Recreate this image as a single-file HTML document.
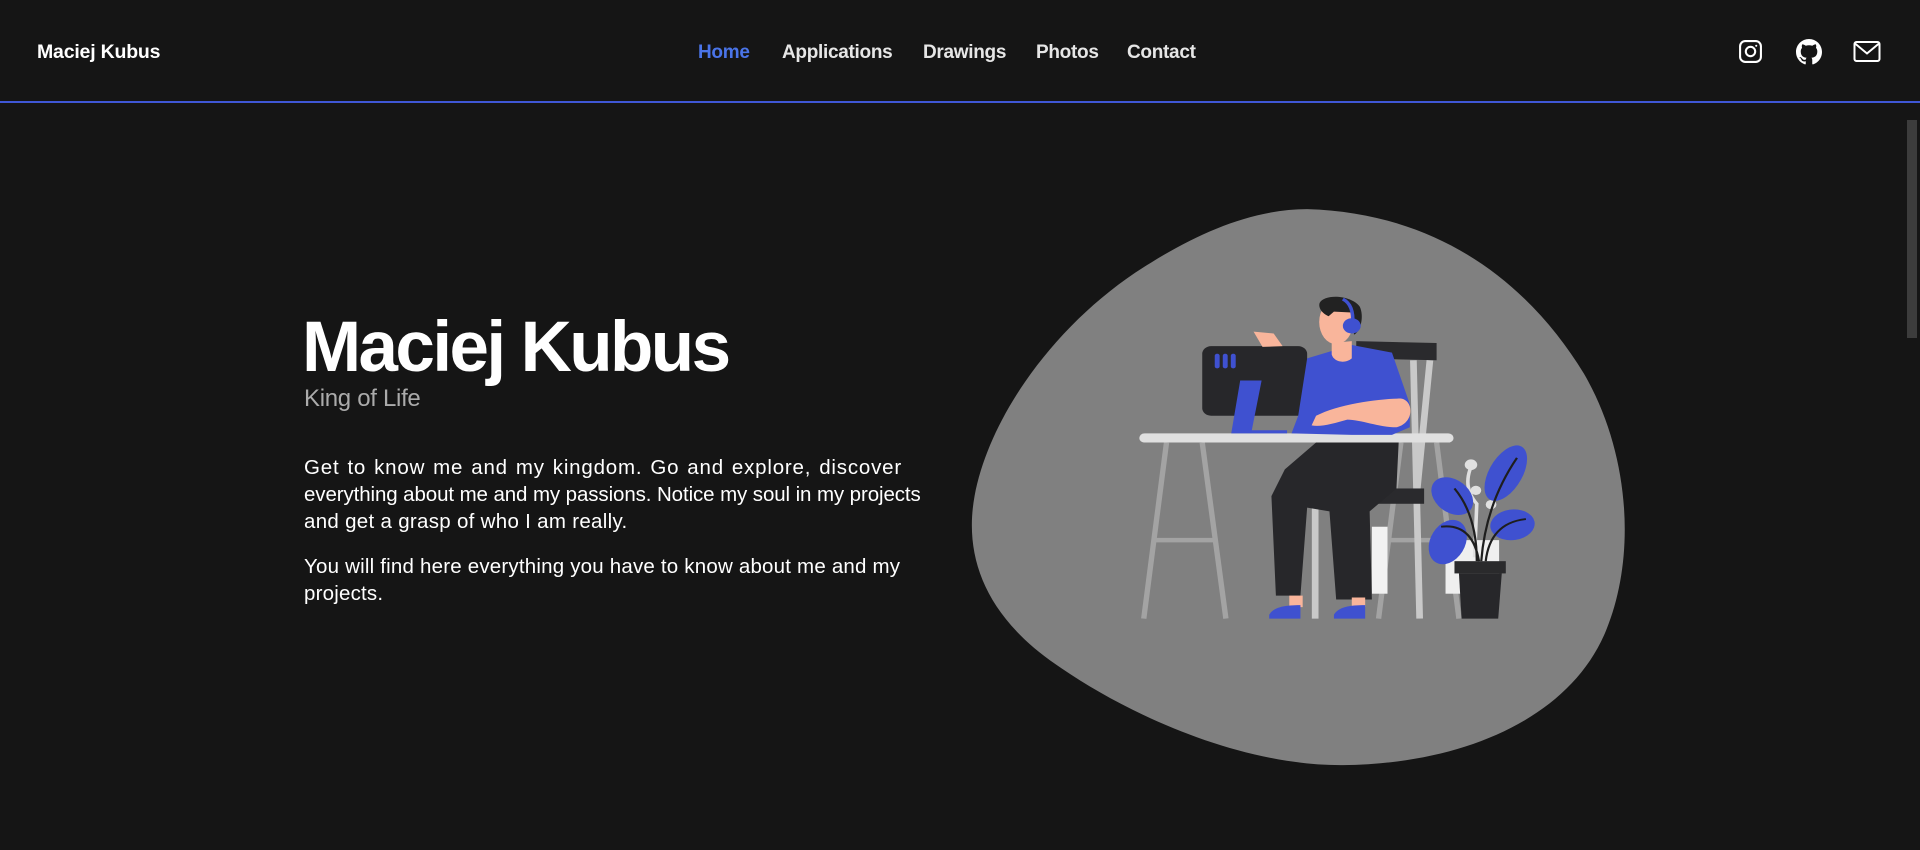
<!DOCTYPE html>
<html><head><meta charset="utf-8"><style>
*{margin:0;padding:0;box-sizing:border-box}
html,body{width:1920px;height:850px;overflow:hidden;background:#151515;font-family:"Liberation Sans",sans-serif;color:#fff}
.hdr{position:absolute;left:0;top:0;width:1920px;height:103px;border-bottom:2px solid #3f57d6}
.logo{position:absolute;left:37px;top:41px;font-weight:bold;font-size:19.5px;letter-spacing:-0.2px}
.nav{position:absolute;top:42px;font-size:19px;font-weight:bold;color:#e6e6e6;letter-spacing:-0.3px}
.ic{position:absolute;top:39px}
.sb{position:absolute;right:0;top:105px;width:15px;height:745px;background:#151515}
.th{position:absolute;right:3px;top:120px;width:10px;height:218px;background:#3c3c3c}
h1{position:absolute;left:302px;top:308px;font-size:71px;font-weight:bold;letter-spacing:-2.6px;line-height:80px}
.sub{position:absolute;left:304px;top:385px;font-size:24px;color:#ababab;letter-spacing:-0.3px}
.p{position:absolute;left:304px;white-space:nowrap;font-size:20.5px;line-height:27px;letter-spacing:0.2px}
</style></head><body>
<div class="hdr">
<div class="logo">Maciej Kubus</div>
<div class="nav" style="left:698px;color:#4a74e8">Home</div>
<div class="nav" style="left:782px">Applications</div>
<div class="nav" style="left:923px">Drawings</div>
<div class="nav" style="left:1036px">Photos</div>
<div class="nav" style="left:1127px">Contact</div>
<svg class="ic" style="left:1738px" width="25" height="25" viewBox="0 0 24 24" fill="none" stroke="#fff" stroke-width="2"><rect x="2" y="2" width="20" height="20" rx="5"/><circle cx="12" cy="12" r="4.5"/><circle cx="17.5" cy="6.5" r="1" fill="#fff" stroke="none"/></svg>
<svg class="ic" style="left:1796px" width="26" height="26" viewBox="0 0 16 16" fill="#fff"><path d="M8 0C3.58 0 0 3.58 0 8c0 3.54 2.29 6.53 5.47 7.59.4.07.55-.17.55-.38 0-.19-.01-.82-.01-1.49-2.01.37-2.53-.49-2.69-.94-.09-.23-.48-.94-.82-1.13-.28-.15-.68-.52-.01-.53.63-.01 1.08.58 1.23.82.72 1.21 1.87.87 2.33.66.07-.52.28-.87.51-1.07-1.78-.2-3.64-.89-3.64-3.95 0-.87.31-1.59.82-2.15-.08-.2-.36-1.02.08-2.12 0 0 .67-.21 2.2.82.64-.18 1.32-.27 2-.27.68 0 1.36.09 2 .27 1.53-1.04 2.2-.82 2.2-.82.44 1.1.16 1.92.08 2.12.51.56.82 1.27.82 2.15 0 3.07-1.87 3.75-3.65 3.95.29.25.54.73.54 1.48 0 1.07-.01 1.93-.01 2.2 0 .21.15.46.55.38A8.01 8.01 0 0016 8c0-4.42-3.58-8-8-8z"/></svg>
<svg class="ic" style="left:1853px;top:40px" width="28" height="23" viewBox="0 0 28 22" fill="none" stroke="#fff" stroke-width="2"><rect x="1.5" y="1.5" width="25" height="19" rx="2"/><path d="M2 3l12 10 12-10"/></svg>
</div>
<div class="sb"></div><div class="th"></div>
<h1>Maciej Kubus</h1>
<div class="sub">King of Life</div>
<div class="p" style="top:454px"><span style="letter-spacing:0.8px;word-spacing:1.5px">Get to know me and my kingdom. Go and explore, discover</span><br><span style="letter-spacing:-0.1px">everything about me and my passions. Notice my soul in my projects</span><br><span style="letter-spacing:0.3px">and get a grasp of who I am really.</span></div>
<div class="p" style="top:553px">You will find here everything you have to know about me and my<br>projects.</div>
<svg style="position:absolute;left:950px;top:190px" width="700" height="600" viewBox="0 0 1568 1568" preserveAspectRatio="none">
<path d="M800 50C1100 60 1300 250 1420 480C1520 680 1540 950 1470 1150C1390 1380 1150 1500 880 1503C650 1505 400 1370 250 1250C80 1120 30 960 55 800C90 580 250 330 450 190C560 110 680 50 800 50Z" fill="#808080"/>
<g stroke="#a3a3a3" stroke-width="12" fill="none">
<path d="M485 660L434 1120M565 660L618 1120M460 915H595M1090 660L1140 1120M1010 660L960 1120M975 915H1085"/></g>
<g stroke="#c9c9c9" stroke-width="15"><path d="M1038 445L1052 1120M1075 445L1045 800M818 820L818 1120"/></g>
<rect x="945" y="880" width="35" height="175" fill="#f2f2f2"/>
<rect x="1110" y="915" width="120" height="140" fill="#efefef"/>
<path d="M910 395L1090 400L1090 445L910 440Z" fill="#2a2a2d"/>
<rect x="940" y="780" width="122" height="40" fill="#2a2a2d"/>
<rect x="424" y="636" width="704" height="24" rx="12" fill="#e0e0e0"/>
<rect x="565" y="408" width="235" height="182" rx="20" fill="#27272a"/>
<g fill="#3f51d0"><rect x="593" y="428" width="11" height="38" rx="5"/><rect x="611" y="428" width="11" height="38" rx="5"/><rect x="629" y="428" width="11" height="38" rx="5"/>
<path d="M650 498H698L676 628H755V636H630Z"/></g>
<path d="M800 440L900 405L990 425L1030 560L1030 620L990 640L900 640L765 636L780 590Z" fill="#3f51d0"/>
<path d="M820 590C870 560 960 545 1010 545C1040 550 1040 610 1000 620C960 620 920 600 890 600C860 610 830 620 810 615Z" fill="#f9b59b"/>
<path d="M680 370L725 375L745 408L700 410Z" fill="#f9b59b"/>
<path d="M855 400L900 395L900 440C885 455 860 450 855 430Z" fill="#f9b59b"/>
<ellipse cx="865" cy="345" rx="38" ry="58" fill="#f9b59b"/>
<path d="M828 295C840 270 900 275 918 305C928 330 920 370 905 378L900 320L860 318L848 330C830 320 825 305 828 295Z" fill="#222"/>
<path d="M880 285Q905 300 902 350" stroke="#3f51d0" stroke-width="8" fill="none"/>
<circle cx="900" cy="355" r="20" fill="#3f51d0"/>
<path d="M820 660H1005L1000 780L940 840L945 1070H865L850 840L800 830L785 1060H730L720 800L750 730Z" fill="#27272a"/>
<path d="M760 1060H790V1090H760ZM900 1065H930V1090H900Z" fill="#f9b59b"/>
<path d="M715 1110C725 1090 750 1085 785 1085V1120H715ZM860 1110C870 1090 895 1085 930 1085V1120H860Z" fill="#3f51d0"/>
<g fill="#e0e0e0"><circle cx="1167" cy="718" r="14"/><circle cx="1178" cy="785" r="12"/><circle cx="1212" cy="822" r="12"/><path d="M1165 730Q1150 780 1180 820L1175 960" stroke="#e0e0e0" stroke-width="8" fill="none"/></g>
<g fill="#3f51d0"><ellipse cx="1245" cy="740" rx="38" ry="78" transform="rotate(25 1245 740)"/><ellipse cx="1125" cy="800" rx="40" ry="55" transform="rotate(-40 1125 800)"/><ellipse cx="1260" cy="875" rx="50" ry="40" transform="rotate(-10 1260 875)"/><ellipse cx="1115" cy="920" rx="40" ry="60" transform="rotate(20 1115 920)"/></g>
<path d="M1180 970Q1180 850 1130 780M1190 970Q1200 820 1270 700M1200 970Q1210 870 1290 860M1185 970Q1170 870 1100 880" stroke="#1e1e1e" stroke-width="5" fill="none"/>
<rect x="1130" y="970" width="115" height="32" fill="#2a2a2c"/>
<path d="M1140 1002H1236L1228 1120H1146Z" fill="#27272a"/>
</svg>
</body></html>
